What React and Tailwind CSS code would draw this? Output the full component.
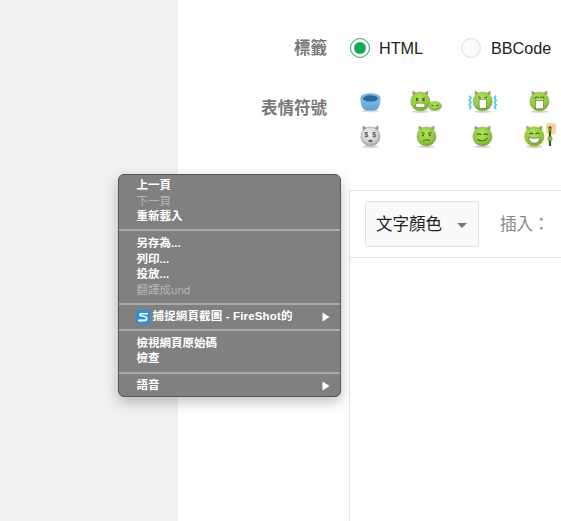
const cjk = { fontFamily: '"Helvetica Neue", "Liberation Sans", "Noto Sans CJK TC", sans-serif' };

function Defs() {
  return (
    <svg width="0" height="0" className="absolute">
      <defs>
        <radialGradient id="g" cx="45%" cy="35%" r="70%">
          <stop offset="0%" stopColor="#b4e35f" />
          <stop offset="65%" stopColor="#90ca3e" />
          <stop offset="100%" stopColor="#6d9e2e" />
        </radialGradient>
        <radialGradient id="s" cx="45%" cy="35%" r="70%">
          <stop offset="0%" stopColor="#f2f2f2" />
          <stop offset="65%" stopColor="#cfcfcf" />
          <stop offset="100%" stopColor="#979797" />
        </radialGradient>
        <linearGradient id="b" x1="0" y1="0" x2="0" y2="1">
          <stop offset="0%" stopColor="#8cc0e4" />
          <stop offset="100%" stopColor="#5a9fd0" />
        </linearGradient>
      </defs>
    </svg>
  );
}

function Head({ cx = 12, cy = 13, r = 8, fill = "url(#g)", horn = "#8aa35a" }) {
  return (
    <g>
      <ellipse cx={cx} cy={cy + r + 0.6} rx={r - 1} ry="1.2" fill="#000" opacity="0.18" />
      <path d={`M${cx - r + 1.5} ${cy - r + 3} L${cx - r + 1.5} ${cy - r - 1.2} L${cx - 3.5} ${cy - r + 1} Z`} fill={horn} />
      <path d={`M${cx + r - 1.5} ${cy - r + 3} L${cx + r - 1.5} ${cy - r - 1.2} L${cx + 3.5} ${cy - r + 1} Z`} fill={horn} />
      <circle cx={cx} cy={cy} r={r} fill={fill} stroke={horn} strokeWidth="0.5" />
    </g>
  );
}

function Ico({ w = 24, children, cls = "" }) {
  return (
    <svg width={w * 1.12} height={24 * 1.12} viewBox={`0 0 ${w} 24`} className={`max-w-none shrink-0 ${cls}`}>
      {children}
    </svg>
  );
}

const stroke = "#47691f";

function Emojis() {
  return (
    <div className="grid grid-cols-[56px_56px_57px_56px] grid-rows-[35px_35px]">
      <div className="flex justify-center">
        <Ico>
          <ellipse cx="12" cy="20.5" rx="7.5" ry="1.2" fill="#000" opacity="0.15" />
          <path d="M3 9 C3 16 5 20 9 20 H15 C19 20 21 16 21 9 Z" fill="url(#b)" />
          <ellipse cx="12" cy="9" rx="9" ry="4.4" fill="#7ab3de" />
          <ellipse cx="12" cy="9.3" rx="6.6" ry="2.8" fill="#2a6a9e" />
        </Ico>
      </div>
      <div className="flex justify-center">
        <Ico w={32}>
          <Head cx={11} cy={12} r={8.5} />
          <path d="M7 9 l2.6 1 M15 9 l-2.6 1" stroke={stroke} strokeWidth="0.9" />
          <ellipse cx="8" cy="11" rx="1" ry="1.1" fill={stroke} />
          <ellipse cx="14" cy="11" rx="1" ry="1.1" fill={stroke} />
          <rect x="6.8" y="13.6" width="8.4" height="3.8" rx="1.5" fill="#fff" stroke={stroke} strokeWidth="0.5" />
          <ellipse cx="24" cy="20" rx="5" ry="1" fill="#000" opacity="0.15" />
          <ellipse cx="24" cy="16" rx="6" ry="3.9" fill="url(#g)" stroke="#8aa35a" strokeWidth="0.4" />
          <path d="M21 15.5 h2 M25 15.5 h2" stroke={stroke} strokeWidth="0.8" />
        </Ico>
      </div>
      <div className="flex justify-center">
        <Ico w={28}>
          <path d="M2 7 l1.5 2 -1.5 2 1.5 2 -1.5 2 1.5 2 -1.5 2 M26 7 l-1.5 2 1.5 2 -1.5 2 1.5 2 -1.5 2 1.5 2" stroke="#3fc7f2" strokeWidth="1.4" fill="none" />
          <Head cx={14} cy={12} r={8.5} />
          <path d="M10 7.8 l2.4 1.2 M18 7.8 l-2.4 1.2" stroke={stroke} strokeWidth="0.9" />
          <rect x="10.8" y="10" width="6.4" height="8" fill="#fff" stroke={stroke} strokeWidth="0.5" />
        </Ico>
      </div>
      <div className="flex justify-center">
        <Ico>
          <Head cx={12} cy={12} r={8.5} />
          <path d="M7.5 9.5 q2 -2.5 4 -0.6 M16.5 9.5 q-2 -2.5 -4 -0.6" stroke={stroke} strokeWidth="0.9" fill="none" />
          <rect x="8.4" y="11" width="7.2" height="7.6" fill="#fff" stroke={stroke} strokeWidth="0.5" />
        </Ico>
      </div>
      <div className="flex justify-center">
        <Ico>
          <Head cx={12} cy={12} r={8.5} fill="url(#s)" horn="#8f8f8f" />
          <text x="6.6" y="12.5" fontSize="6" fontWeight="700" fill="#555" fontFamily="Liberation Sans">$</text>
          <text x="13.6" y="12.5" fontSize="6" fontWeight="700" fill="#555" fontFamily="Liberation Sans">$</text>
          <ellipse cx="12" cy="16" rx="2" ry="1.1" fill="#666" />
        </Ico>
      </div>
      <div className="flex justify-center">
        <Ico>
          <Head cx={12} cy={12} r={8.5} />
          <path d="M7.5 8.5 l3 0.8 M16.5 8.5 l-3 0.8" stroke={stroke} strokeWidth="0.9" />
          <circle cx="9" cy="11" r="1" fill={stroke} />
          <circle cx="15" cy="11" r="1" fill={stroke} />
          <path d="M9 16.4 q3 -2.6 6 -0.4" stroke={stroke} strokeWidth="1" fill="none" />
        </Ico>
      </div>
      <div className="flex justify-center">
        <Ico>
          <Head cx={12} cy={12} r={8.5} />
          <path d="M7 10.5 q2 -1.5 4 0 M13 10.5 q2 -1.5 4 0" stroke={stroke} strokeWidth="1" fill="none" />
          <path d="M7.5 14.5 q5 3.6 9 -1" stroke={stroke} strokeWidth="1" fill="none" />
        </Ico>
      </div>
      <div className="flex justify-center">
        <Ico w={32} cls="ml-[1px]">
          <circle cx="11" cy="12" r="10.5" fill="#fff7b8" opacity="0.8" />
          <rect x="21.5" y="0" width="9" height="10" rx="3" fill="#f7c98a" opacity="0.8" />
          <Head cx={11} cy={12} r={8.5} />
          <path d="M6.5 10 q2 -2 3.6 0 M12 10 q2 -2 3.6 0" stroke={stroke} strokeWidth="1" fill="none" />
          <path d="M5.8 13 q5.2 1.4 10.4 0 q-1 5 -5.2 5 q-4.2 0 -5.2 -5 Z" fill="#fff" stroke={stroke} strokeWidth="0.6" />
          <path d="M25 3 V20.5" stroke="#3c5a16" strokeWidth="2" />
          <path d="M22.5 3 L25 5 L27.5 2.5 L26 7 H24 Z" fill="#6aa82c" />
          <circle cx="25" cy="14" r="2" fill="#8cc63a" stroke="#4d6d20" strokeWidth="0.4" />
        </Ico>
      </div>
    </div>
  );
}

function Row({ children, muted }) {
  return (
    <div className={`flex h-[15.5px] items-center pl-[17.5px] pr-[10px] ${muted ? "text-[#b4b4b4]" : "text-white font-semibold"}`}>
      {children}
    </div>
  );
}

function Arrow() {
  return (
    <svg width="8" height="10" viewBox="0 0 8 10" className="ml-auto">
      <path d="M0.5 0.5 L7.5 5 L0.5 9.5 Z" fill="#fff" />
    </svg>
  );
}

function Sep({ cls = "my-[4.75px]" }) {
  return <div className={`h-[2px] bg-[#a8a8a8] ${cls}`} />;
}

function ContextMenu() {
  return (
    <div className="absolute left-[118px] top-[174px] h-[223px] w-[223px] rounded-[6px] border border-[#555555] bg-[#808080] pt-[3px] text-[11.5px] leading-none shadow-[0_5px_14px_rgba(0,0,0,0.25)]">
      <Row>上一頁</Row>
      <Row muted>下一頁</Row>
      <Row>重新載入</Row>
      <Sep />
      <Row>另存為...</Row>
      <Row>列印...</Row>
      <Row>投放...</Row>
      <Row muted>翻譯成und</Row>
      <Sep cls="mt-[4.5px] mb-[4.25px]" />
      <Row>
        <svg width="14" height="14" viewBox="0 0 14 14" className="mr-[3px] -ml-[1px] shrink-0">
          <rect width="14" height="14" rx="1" fill="#2f8fd0" />
          <path d="M12 3 H5 C2.5 3 2.5 6.4 5 6.6 L9 7.2 C10.5 7.5 10 9.6 8.5 9.6 H2 V11.4 H9 C12 11.4 12.4 6.4 9.4 5.9 L5.6 5.3 C4.8 5.1 5 4.6 5.6 4.6 H12 Z" fill="#fff" />
        </svg>
        <span className="tracking-[0.15px]">捕捉網頁截圖 - FireShot的</span>
        <Arrow />
      </Row>
      <Sep />
      <Row>檢視網頁原始碼</Row>
      <Row>檢查</Row>
      <Sep />
      <Row>
        語音
        <Arrow />
      </Row>
    </div>
  );
}

export default function App() {
  return (
    <div className="relative flex h-[521px] w-[561px] overflow-hidden bg-white" style={cjk}>
      <Defs />
      <div className="w-[178px] shrink-0 bg-[#f1f1f1]" />
      <div className="flex min-w-0 flex-1 flex-col">
        <div className="h-[24px] shrink-0" />
        <div className="flex h-[48px] shrink-0 items-center">
          <div className="w-[149px] shrink-0 text-right text-[16.5px] font-bold text-[#777777]">標籤</div>
          <div className="ml-[23px] flex items-center text-[16.2px] text-[#222222]">
            <span className="flex h-[20px] w-[20px] items-center justify-center rounded-full border border-[#1faa59] bg-white">
              <span className="h-[12px] w-[12px] rounded-full bg-[#16a853]" />
            </span>
            <span className="ml-[9px] w-[82px]">HTML</span>
            <span className="h-[20px] w-[20px] rounded-full border border-[#dddddd] bg-[#fafafa]" />
            <span className="ml-[10px] whitespace-nowrap">BBCode</span>
          </div>
        </div>
        <div className="flex h-[118px] shrink-0 items-start pt-[16px]">
          <div className="mt-[8px] w-[149px] shrink-0 text-right text-[16.5px] font-bold text-[#777777]">表情符號</div>
          <div className="ml-[15px] shrink-0"><Emojis /></div>
        </div>
        <div className="ml-[171px] flex min-h-0 flex-1 flex-col border-l border-t border-[#e6e6e6]">
          <div className="flex h-[67px] shrink-0 items-center border-b border-[#e6e6e6] pl-[15px]">
            <div className="flex h-[46px] w-[114px] shrink-0 items-center rounded-[3px] border border-[#e2e2e2] bg-[#fafafa] pl-[10px] text-[16.5px] text-[#222222]">
              文字顏色
              <span className="ml-[15px] mt-[3px] h-0 w-0 border-x-[5px] border-t-[5px] border-x-transparent border-t-[#777777]" />
            </div>
            <span className="ml-[21px] whitespace-nowrap text-[16.5px] text-[#888888]">插入：</span>
          </div>
          <div className="flex-1" />
        </div>
      </div>
      <ContextMenu />
    </div>
  );
}
